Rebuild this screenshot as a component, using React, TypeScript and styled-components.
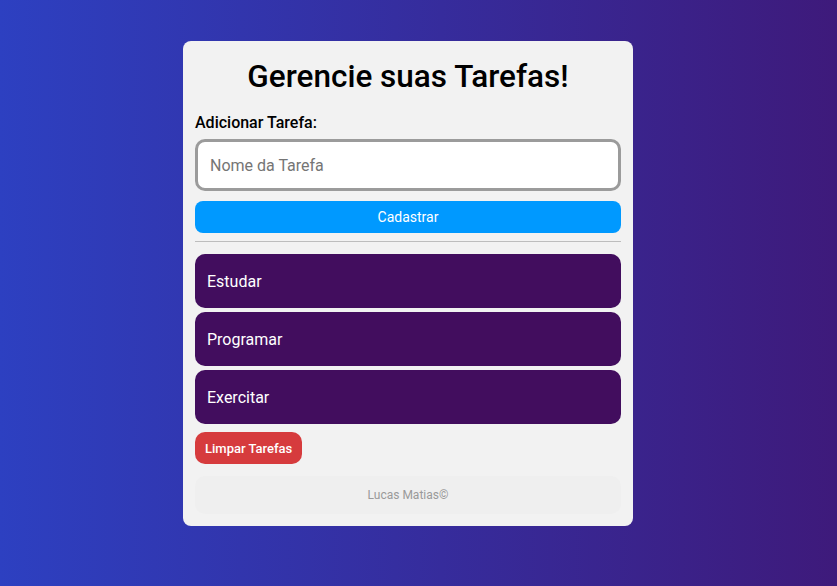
import React from "react";
import styled, { createGlobalStyle } from "styled-components";

const Global = createGlobalStyle`
  html, body { margin: 0; padding: 0; }
  body {
    min-height: 586px;
    background: linear-gradient(to right, #2d40c1, #3e1a7b);
    font-family: Roboto, "Noto Sans", sans-serif;
  }
`;

const Page = styled.div`
  display: flex;
  justify-content: center;
  padding: 41px 21px 0 0;
`;

const Card = styled.main`
  box-sizing: border-box;
  width: 450px;
  height: 485px;
  background: #f2f2f2;
  border-radius: 8px;
  padding: 12px;
  display: flex;
  flex-direction: column;
`;

const Title = styled.h1`
  margin: 4px 0 0;
  font-size: 31.5px;
  font-weight: 500;
  line-height: 40px;
  text-align: center;
  color: #000;
`;

const Label = styled.label`
  margin-top: 16px;
  font-size: 16px;
  font-weight: 500;
  line-height: 20px;
  color: #000;
`;

const Input = styled.input`
  box-sizing: border-box;
  margin-top: 6px;
  width: 100%;
  height: 52px;
  border: 3px solid #9b9b9b;
  border-radius: 10px;
  background: #fff;
  padding: 2px 12px 0;
  font-family: Roboto, sans-serif;
  font-size: 16px;
  outline: none;
  &::placeholder { color: #757575; }
`;

const Button = styled.button<{ $variant?: "primary" | "danger" }>`
  box-sizing: border-box;
  border: none;
  cursor: pointer;
  font-family: Roboto, sans-serif;
  color: #fff;
  ${(p) =>
    p.$variant === "danger"
      ? `
    align-self: flex-start;
    margin-top: 8px;
    height: 32px;
    padding: 0 10px;
    background: #d63b3d;
    border-radius: 10px;
    font-size: 13px;
    font-weight: 500;
  `
      : `
    margin-top: 10px;
    width: 100%;
    height: 32px;
    background: #0099ff;
    border-radius: 8px;
    font-size: 14px;
  `}
`;

const Divider = styled.hr`
  margin: 8px 0 12px;
  border: none;
  height: 2px;
  background: #bdbdbd;
`;

const List = styled.ul`
  list-style: none;
  margin: 0;
  padding: 0;
  display: flex;
  flex-direction: column;
  gap: 4px;
`;

const Task = styled.li`
  box-sizing: border-box;
  height: 54px;
  display: flex;
  align-items: center;
  padding: 0 12px;
  background: #420d5e;
  color: #fff;
  border-radius: 10px;
  font-size: 16px;
`;

const Footer = styled.footer`
  margin-top: 12px;
  height: 38px;
  display: flex;
  align-items: center;
  justify-content: center;
  background: #efefef;
  border-radius: 10px;
  color: #9a9a9a;
  font-size: 12px;
`;

const tasks = ["Estudar", "Programar", "Exercitar"];

export default function App() {
  return (
    <>
      <Global />
      <Page>
        <Card>
          <Title>Gerencie suas Tarefas!</Title>
          <Label htmlFor="task">Adicionar Tarefa:</Label>
          <Input id="task" placeholder="Nome da Tarefa" />
          <Button $variant="primary">Cadastrar</Button>
          <Divider />
          <List>
            {tasks.map((t) => (
              <Task key={t}>{t}</Task>
            ))}
          </List>
          <Button $variant="danger">Limpar Tarefas</Button>
          <Footer>Lucas Matias©</Footer>
        </Card>
      </Page>
    </>
  );
}
